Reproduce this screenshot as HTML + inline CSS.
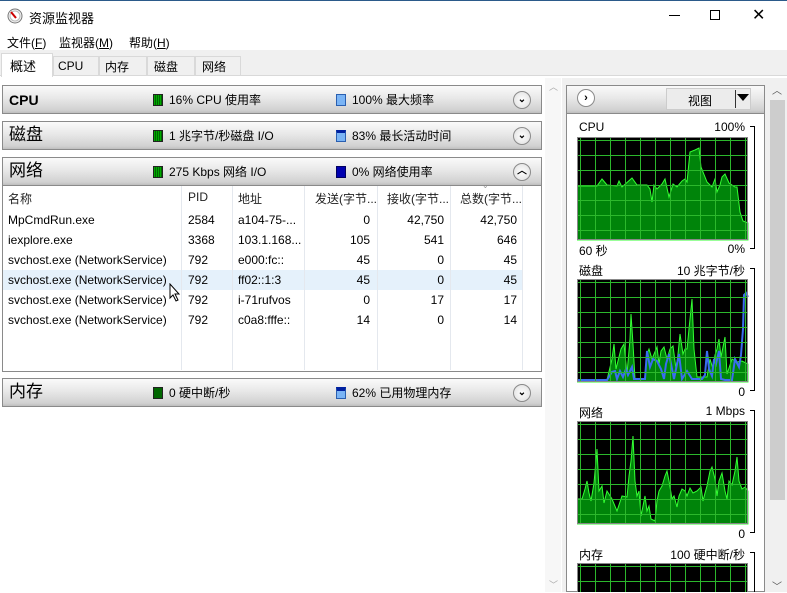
<!DOCTYPE html>
<html><head><meta charset="utf-8"><style>
*{box-sizing:border-box;margin:0;padding:0}
body{width:787px;height:592px;overflow:hidden;background:#fff;font-family:"Liberation Sans","Noto Sans CJK SC",sans-serif;font-size:12px;color:#000;position:relative}
.a{position:absolute}
.hdr{position:absolute;left:2px;width:540px;height:29px;border:1px solid #8a8a8a;background:linear-gradient(#fafafa,#e8e8e8 45%,#d0d0d0 90%,#bdbdbd)}
.hdr .t{position:absolute;left:6px;top:3px;font-size:17px;line-height:20px}
.hdr .l{position:absolute;top:7px;font-size:12px;line-height:14px}
.sq{display:inline-block;width:10px;height:12px;vertical-align:-2px;margin-right:6px;border:1px solid #333}
.g{background:repeating-linear-gradient(90deg,#0a0 0 1px,#060 1px 2px);background-color:#0c0;border-color:#222}
.b{background:#7ab4f5;border-color:#2a5fb0}
.bb{background:#0000b0;border-color:#000060}
.cv{position:absolute;right:10px;top:5px;width:18px;height:18px;border-radius:50%;border:1px solid #8a8a8a;background:radial-gradient(#fff,#ddd);font-size:10px;text-align:center;line-height:16px;font-weight:bold}
.th{position:absolute;top:190px;font-size:12px;color:#222}
.r{position:absolute;font-size:12px;white-space:nowrap}
.col{position:absolute;top:186px;height:184px;border-left:1px solid #e4e8ee}
.gl{position:absolute;font-size:12px}
</style></head><body>
<div class="a" style="left:0;top:0;width:787px;height:1px;background:#2b5a8a"></div>
<svg class="a" style="left:7px;top:8px" width="16" height="16"><circle cx="8" cy="8" r="7" fill="#f4f4f4" stroke="#777"/><circle cx="8" cy="8" r="5" fill="#fff" stroke="#bbb"/><line x1="4" y1="4" x2="9" y2="10" stroke="#c00" stroke-width="2"/></svg>
<div class="a" style="left:29px;top:8px;font-size:13px">资源监视器</div>
<div class="a" style="left:669px;top:15px;width:11px;height:1px;background:#000"></div>
<div class="a" style="left:710px;top:10px;width:10px;height:10px;border:1px solid #000"></div>
<div class="a" style="left:752px;top:5px;font-size:16px">✕</div>
<div class="a" style="left:7px;top:34px;font-size:12px">文件(<u>F</u>)</div>
<div class="a" style="left:59px;top:34px;font-size:12px">监视器(<u>M</u>)</div>
<div class="a" style="left:129px;top:34px;font-size:12px">帮助(<u>H</u>)</div>
<div class="a" style="left:0;top:50px;width:787px;height:26px;background:#f0f0f0;border-bottom:1px solid #d9d9d9"></div>
<div class="a" style="left:1px;top:53px;width:52px;height:24px;background:#fff;border:1px solid #d9d9d9;border-bottom:none;padding:2px 0 0 8px;font-size:13px">概述</div>
<div class="a" style="left:53px;top:56px;width:46px;height:20px;border:1px solid #d9d9d9;padding:2px 0 0 4px;font-size:12px">CPU</div>
<div class="a" style="left:99px;top:56px;width:48px;height:20px;border:1px solid #d9d9d9;padding:1px 0 0 5px;font-size:12px">内存</div>
<div class="a" style="left:147px;top:56px;width:48px;height:20px;border:1px solid #d9d9d9;padding:1px 0 0 6px;font-size:12px">磁盘</div>
<div class="a" style="left:195px;top:56px;width:46px;height:20px;border:1px solid #d9d9d9;padding:1px 0 0 6px;font-size:12px">网络</div>

<div class="a" style="left:545px;top:78px;width:16px;height:514px;background:#f7f7f7"></div>
<div class="a" style="left:549px;top:80px;font-size:9px;color:#aaa">︿</div>
<div class="a" style="left:549px;top:578px;font-size:9px;color:#aaa">﹀</div>

<div class="hdr" style="top:85px"><div class="t" style="font-weight:bold;font-size:14px;top:4px">CPU</div>
<div class="l" style="left:150px"><span class="sq g"></span>16% CPU 使用率</div>
<div class="l" style="left:333px"><span class="sq b"></span>100% 最大频率</div><div class="cv">⌄</div></div>
<div class="hdr" style="top:121px"><div class="t">磁盘</div>
<div class="l" style="left:150px"><span class="sq g"></span>1 兆字节/秒磁盘 I/O</div>
<div class="l" style="left:333px"><span class="sq b" style="border-top:3px solid #0020a0"></span>83% 最长活动时间</div><div class="cv">⌄</div></div>
<div class="hdr" style="top:157px"><div class="t">网络</div>
<div class="l" style="left:150px"><span class="sq g"></span>275 Kbps 网络 I/O</div>
<div class="l" style="left:333px"><span class="sq bb"></span>0% 网络使用率</div><div class="cv">︿</div></div>

<div class="a" style="left:2px;top:185px;width:540px;height:187px;border:1px solid #8a8a8a;border-top:none"></div>
<div class="a" style="left:3px;top:270px;width:520px;height:20px;background:#e5f1fb"></div>
<div class="col" style="left:181px"></div><div class="col" style="left:232px"></div><div class="col" style="left:304px"></div><div class="col" style="left:377px"></div><div class="col" style="left:450px"></div><div class="col" style="left:522px"></div>
<div class="th" style="left:8px">名称</div><div class="th" style="left:188px">PID</div><div class="th" style="left:238px">地址</div><div class="th" style="left:315px">发送(字节...</div><div class="th" style="left:387px">接收(字节...</div><div class="th" style="left:460px">总数(字节...</div>
<div class="a" style="left:482px;top:181px;font-size:8px;color:#999">⌄</div>

<div class="r" style="left:8px;top:213px">MpCmdRun.exe</div><div class="r" style="left:188px;top:213px">2584</div><div class="r" style="left:238px;top:213px">a104-75-...</div><div class="r" style="left:304px;width:66px;text-align:right;top:213px">0</div><div class="r" style="left:377px;width:67px;text-align:right;top:213px">42,750</div><div class="r" style="left:450px;width:67px;text-align:right;top:213px">42,750</div>
<div class="r" style="left:8px;top:233px">iexplore.exe</div><div class="r" style="left:188px;top:233px">3368</div><div class="r" style="left:238px;top:233px">103.1.168...</div><div class="r" style="left:304px;width:66px;text-align:right;top:233px">105</div><div class="r" style="left:377px;width:67px;text-align:right;top:233px">541</div><div class="r" style="left:450px;width:67px;text-align:right;top:233px">646</div>
<div class="r" style="left:8px;top:253px">svchost.exe (NetworkService)</div><div class="r" style="left:188px;top:253px">792</div><div class="r" style="left:238px;top:253px">e000:fc::</div><div class="r" style="left:304px;width:66px;text-align:right;top:253px">45</div><div class="r" style="left:377px;width:67px;text-align:right;top:253px">0</div><div class="r" style="left:450px;width:67px;text-align:right;top:253px">45</div>
<div class="r" style="left:8px;top:273px">svchost.exe (NetworkService)</div><div class="r" style="left:188px;top:273px">792</div><div class="r" style="left:238px;top:273px">ff02::1:3</div><div class="r" style="left:304px;width:66px;text-align:right;top:273px">45</div><div class="r" style="left:377px;width:67px;text-align:right;top:273px">0</div><div class="r" style="left:450px;width:67px;text-align:right;top:273px">45</div>
<div class="r" style="left:8px;top:293px">svchost.exe (NetworkService)</div><div class="r" style="left:188px;top:293px">792</div><div class="r" style="left:238px;top:293px">i-71rufvos</div><div class="r" style="left:304px;width:66px;text-align:right;top:293px">0</div><div class="r" style="left:377px;width:67px;text-align:right;top:293px">17</div><div class="r" style="left:450px;width:67px;text-align:right;top:293px">17</div>
<div class="r" style="left:8px;top:313px">svchost.exe (NetworkService)</div><div class="r" style="left:188px;top:313px">792</div><div class="r" style="left:238px;top:313px">c0a8:fffe::</div><div class="r" style="left:304px;width:66px;text-align:right;top:313px">14</div><div class="r" style="left:377px;width:67px;text-align:right;top:313px">0</div><div class="r" style="left:450px;width:67px;text-align:right;top:313px">14</div>
<svg class="a" style="left:169px;top:283px" width="12" height="19"><path d="M1 1 L1 15 L4 12 L7 18 L9 17 L6 11 L10 11 Z" fill="#fff" stroke="#000"/></svg>

<div class="hdr" style="top:378px"><div class="t">内存</div>
<div class="l" style="left:150px"><span class="sq g" style="background:#060"></span>0 硬中断/秒</div>
<div class="l" style="left:333px"><span class="sq b" style="border-top:4px solid #0020a0"></span>62% 已用物理内存</div><div class="cv">⌄</div></div>

<div class="a" style="left:562px;top:78px;width:205px;height:514px;background:#f0f0f0"></div>
<div class="a" style="left:566px;top:85px;width:199px;height:507px;background:#fff;border:1px solid #8a8a8a"></div>
<div class="a" style="left:566px;top:85px;width:199px;height:29px;border:1px solid #8a8a8a;background:linear-gradient(#fafafa,#e8e8e8 45%,#d0d0d0 90%,#bdbdbd)"></div>
<div class="a" style="left:577px;top:89px;width:18px;height:18px;border-radius:50%;border:1px solid #8a8a8a;background:#fff;font-size:11px;text-align:center;line-height:16px;font-weight:bold">›</div>
<div class="a" style="left:666px;top:88px;width:85px;height:22px;background:#ececec;border:1px solid #ccc;font-size:12px;padding:3px 0 0 21px">视图</div>
<div class="a" style="left:735px;top:90px;width:1px;height:18px;background:#333"></div>
<div class="a" style="left:737px;top:94px;width:0;height:0;border-left:6px solid transparent;border-right:6px solid transparent;border-top:7px solid #000"></div>

<div class="gl" style="left:579px;top:120px">CPU</div><div class="gl" style="left:700px;top:120px;width:45px;text-align:right">100%</div>
<div class="gl" style="left:579px;top:242px">60 秒</div><div class="gl" style="left:700px;top:242px;width:45px;text-align:right">0%</div>
<div class="gl" style="left:579px;top:262px">磁盘</div><div class="gl" style="left:650px;top:262px;width:95px;text-align:right">10 兆字节/秒</div>
<div class="gl" style="left:700px;top:385px;width:45px;text-align:right">0</div>
<div class="gl" style="left:579px;top:404px">网络</div><div class="gl" style="left:680px;top:404px;width:65px;text-align:right">1 Mbps</div>
<div class="gl" style="left:700px;top:527px;width:45px;text-align:right">0</div>
<div class="gl" style="left:579px;top:546px">内存</div><div class="gl" style="left:650px;top:546px;width:95px;text-align:right">100 硬中断/秒</div>
<svg class="a" style="left:750px;top:120px" width="8" height="472" fill="none" stroke="#000"><path d="M0 6.5 H4.5 V128.5 H0 M0 148.5 H4.5 V270.5 H0 M0 290.5 H4.5 V412.5 H0 M0 432.5 H4.5 V480"/></svg>

<svg class="a" style="left:577px;top:137px" width="172" height="455">
<defs><pattern id="gp" width="15" height="15" patternUnits="userSpaceOnUse" x="3" y="3"><path d="M0 0.5 H15 M0.5 0 V15" stroke="#2cb82c" stroke-width="1"/></pattern></defs>
<g><rect x="0" y="0" width="171" height="103" fill="#000"/>
<polygon points="0,49 20,49 25,42 30,48 40,49 42,44 45,50 55,41 60,48 70,48 73,52 75,65 77,48 80,52 85,47 88,42 92,60 96,47 100,50 105,44 108,42 110,45 113,15 118,13 122,11 124,30 130,45 135,50 138,42 140,55 143,48 145,40 148,37 152,46 158,50 160,50 163,75 166,84 171,86 171,103 0,103" fill="#00840a" stroke="#3f3" stroke-width="1"/>
<rect width="171" height="103" fill="url(#gp)"/><rect x=".5" y=".5" width="170" height="102" stroke="#888" fill="none"/></g>
<g transform="translate(0,142)"><rect width="171" height="103" fill="#000"/>
<polygon points="0,101 30,101 35,80 37,65 39,90 44,70 47,65 50,95 53,60 54,35 56,65 58,100 68,100 70,75 72,70 75,80 80,68 82,85 84,72 87,68 90,80 93,70 96,67 99,90 101,75 103,55 106,75 108,70 110,70 113,40 115,20 117,70 120,98 130,98 133,80 136,90 138,76 140,70 142,60 144,78 148,58 150,95 155,80 160,83 165,82 171,85 171,103 0,103" fill="#00840a" stroke="#3f3"/>
<polyline points="0,101 30,101 35,93 38,92 40,100 43,92 46,98 49,90 51,96 55,88 57,100 68,100 70,72 73,88 76,80 80,82 84,90 87,100 89,85 92,75 95,90 97,100 100,85 102,75 105,100 110,92 115,100 125,100 128,96 130,72 132,90 135,97 137,80 139,85 142,72 144,100 148,101 155,101 158,80 162,88 164,76 166,50 167,16 169,14 171,18" fill="none" stroke="#3a6df0" stroke-width="2"/>
<rect width="171" height="103" fill="url(#gp)"/><rect x=".5" y=".5" width="170" height="102" stroke="#888" fill="none"/></g>
<g transform="translate(0,284)"><rect width="171" height="103" fill="#000"/>
<polygon points="0,78 5,78 8,68 10,60 12,72 14,80 17,62 20,28 22,70 25,65 27,82 28,78 30,70 35,78 40,90 45,75 50,76 52,55 54,40 56,15 58,60 60,75 62,70 64,95 66,85 68,75 70,90 72,85 74,98 78,100 80,80 82,70 85,65 88,55 90,50 92,60 95,78 97,75 100,86 102,75 105,68 108,70 110,75 113,67 116,72 120,70 124,66 126,80 128,72 130,65 133,50 135,46 138,58 140,75 142,60 145,52 148,70 150,78 152,60 155,64 158,50 160,36 162,60 165,68 168,66 171,70 171,103 0,103" fill="#00840a" stroke="#3f3"/>
<rect width="171" height="103" fill="url(#gp)"/><rect x=".5" y=".5" width="170" height="102" stroke="#888" fill="none"/></g>
<g transform="translate(0,426)"><rect width="171" height="40" fill="#000"/><rect width="171" height="40" fill="url(#gp)"/><rect x=".5" y=".5" width="170" height="40" stroke="#888" fill="none"/></g>
</svg>

<div class="a" style="left:767px;top:78px;width:20px;height:514px;background:#f0f0f0"></div>
<div class="a" style="left:770px;top:100px;width:15px;height:400px;background:#cdcdcd"></div>
<div class="a" style="left:772px;top:82px;font-size:10px;color:#555">︿</div>
<div class="a" style="left:772px;top:578px;font-size:10px;color:#555">﹀</div>
</body></html>
